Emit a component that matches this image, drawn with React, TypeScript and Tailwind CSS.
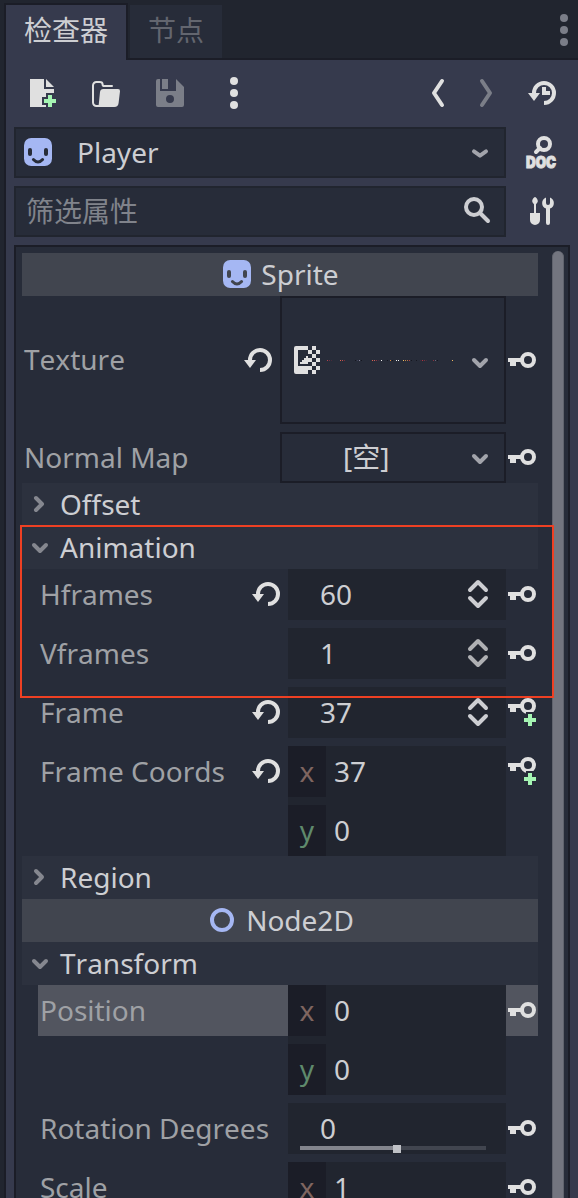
import React from "react";

type IconProps = { className?: string };

function Svg({ className = "", children }: IconProps & { children: React.ReactNode }) {
  return (
    <svg viewBox="0 0 16 16" width="32" height="32" className={`block shrink-0 overflow-visible ${className}`} fill="none">
      {children}
    </svg>
  );
}

const LIGHT = "#e0e0e0";
const DIM = "#7b7e88";
const GREEN = "#a5f5b3";

const Dots = ({ color }: { color: string }) => (
  <Svg>
    <circle cx="8" cy="2" r="2" fill={color} />
    <circle cx="8" cy="8" r="2" fill={color} />
    <circle cx="8" cy="14" r="2" fill={color} />
  </Svg>
);

const Face = ({ hole }: { hole: string }) => (
  <Svg>
    <rect x="1" y="1" width="14" height="14" rx="3.6" fill="#a5b7f3" />
    <rect x="3" y="6" width="2" height="4" rx="1" fill={hole} />
    <rect x="11" y="6" width="2" height="4" rx="1" fill={hole} />
    <path d="M5.7 11.8Q8 14.3 10.3 11.8" stroke={hole} strokeWidth="1.5" strokeLinecap="round" />
  </Svg>
);

const Revert = ({ clock = false }: { clock?: boolean }) => (
  <Svg>
    <path d="M4 8.3V8a5 5 0 1 1 5 5" stroke={LIGHT} strokeWidth="2" />
    <path d="M1 8h6l-3 4z" fill={LIGHT} />
    {clock && <path d="M8 5h2v2h2v2H8z" fill={LIGHT} />}
  </Svg>
);

const Key = () => (
  <Svg>
    <circle cx="11" cy="8" r="3" stroke={LIGHT} strokeWidth="2" />
    <path d="M1 7h7v2H5v2H2V9H1z" fill={LIGHT} />
  </Svg>
);

const KeyAdd = () => (
  <Svg>
    <clipPath id="key-cut">
      <path d="M0 0h16v8h-6v1H0z" />
    </clipPath>
    <circle cx="11" cy="5" r="3" stroke={LIGHT} strokeWidth="2" clipPath="url(#key-cut)" />
    <path d="M1 4h7v2H5v2H2V6H1z" fill={LIGHT} />
    <path d="M11 9h2v2h2v2h-2v2h-2v-2H9v-2h2z" fill={GREEN} />
  </Svg>
);

const ChevronDown = ({ color = "#a2a4ab" }: { color?: string }) => (
  <Svg>
    <path d="M5 7l3 3 3-3" stroke={color} strokeWidth="2" strokeLinecap="round" strokeLinejoin="round" />
  </Svg>
);

const ChevronRight = () => (
  <Svg>
    <path d="M6 5l3 3-3 3" stroke="#85878f" strokeWidth="2" strokeLinecap="round" strokeLinejoin="round" />
  </Svg>
);

const Spinner = ({ color }: { color: string }) => (
  <Svg>
    <path
      d="M4 6l4-4 4 4M4 10l4 4 4-4"
      stroke={color}
      strokeWidth="2"
      strokeLinecap="round"
      strokeLinejoin="round"
    />
  </Svg>
);

const TextureIcon = () => (
  <Svg>
    <path
      fill={LIGHT}
      d="M2 1h6v2H3v8h5v4H2a1 1 0 0 1-1-1V2a1 1 0 0 1 1-1zM4 10V9h1V8h1V7h1V6h1v4z"
    />
    <path
      fill={LIGHT}
      shapeRendering="crispEdges"
      d="M10 1h2v2h-2zM8 3h2v2H8zM12 3h2v2h-2zM10 5h2v2h-2zM8 7h2v2H8zM12 7h2v2h-2zM10 9h2v2h-2zM8 11h2v2H8zM12 11h2v2h-2zM10 13h2v2h-2z"
    />
  </Svg>
);

const SPECKS: [number, string][] = [
  [0, "#b0424c"], [2, "#6f2f44"], [4, "#4a2a3a"],
  [13, "#d9604c"], [15, "#c0504c"], [17, "#7b2c38"],
  [28, "#15161f"], [30, "#3d4058"], [32, "#8a869c"], [34, "#15161f"],
  [45, "#e0604c"], [47, "#c8605a"], [49, "#8a3340"], [51, "#4a2a3a"], [54, "#f0f0f0"],
  [60, "#15161f"], [63, "#d98a3a"], [65, "#15161f"], [69, "#f0f0f0"], [71, "#f0f0f0"],
  [76, "#f0c060"], [78, "#c98a4a"], [80, "#b0724c"], [82, "#b04340"], [84, "#15161f"],
  [89, "#15161f"], [93, "#4a2a3a"], [95, "#b0323c"], [97, "#7a2f3c"], [99, "#4a2a3a"],
  [106, "#8a3340"], [108, "#6a6678"], [110, "#15161f"], [125, "#f0b860"],
];

function TexturePreview() {
  return (
    <svg width="130" height="1" viewBox="0 0 130 1" className="block" shapeRendering="crispEdges">
      {SPECKS.map(([x, fill]) => (
        <rect key={x} x={x} y="0" width="1" height="1" fill={fill} />
      ))}
    </svg>
  );
}

function Label({ text, revert = false, className = "" }: { text: string; revert?: boolean; className?: string }) {
  return (
    <div className={`flex shrink-0 items-center justify-between pr-1.5 pb-px pl-0.5 text-[#9fa1a5] ${className}`}>
      <span>{text}</span>
      {revert && <Revert />}
    </div>
  );
}

function Section({ title, open = false }: { title: string; open?: boolean }) {
  return (
    <div className="flex h-[43px] items-center bg-[#2c313e] pb-px pl-0.5 text-[#cdced2]">
      {open ? <ChevronDown color="#85878f" /> : <ChevronRight />}
      <span className="pl-1">{title}</span>
    </div>
  );
}

function ClassHeader({ title, icon }: { title: string; icon: React.ReactNode }) {
  return (
    <div className="flex h-[43px] items-center justify-center bg-[#41454f] pb-px text-[#cdced2]">
      {icon}
      <span className="pl-2">{title}</span>
    </div>
  );
}

function NumberRow({
  label,
  value,
  revert,
  keyAdd,
  spinner,
}: {
  label: string;
  value: string;
  revert?: boolean;
  keyAdd?: boolean;
  spinner: string;
}) {
  return (
    <div className="flex h-[51px] pl-4">
      <Label text={label} revert={revert} className="w-[250px]" />
      <div className="flex w-[218px] items-center justify-between bg-[#21252f] pr-3 pb-px pl-8 text-[#cdced2]">
        <span>{value}</span>
        <Spinner color={spinner} />
      </div>
      <div className="flex w-8 items-center pb-px">{keyAdd ? <KeyAdd /> : <Key />}</div>
    </div>
  );
}

function Axis({ axis, value }: { axis: "x" | "y"; value: string }) {
  return (
    <div className="flex h-[51px] items-stretch">
      <span
        className={`flex w-[38px] items-center justify-center bg-[#1b1d27] pb-px ${
          axis === "x" ? "text-[#7f6560]" : "text-[#5f8a6c]"
        }`}
      >
        {axis}
      </span>
      <span className="flex items-center pb-px pl-2 text-[#cdced2]">{value}</span>
    </div>
  );
}

function VectorRow({
  label,
  x,
  y,
  revert,
  keyAdd,
  active,
}: {
  label: string;
  x: string;
  y?: string;
  revert?: boolean;
  keyAdd?: boolean;
  active?: boolean;
}) {
  const tint = active ? "bg-[#52555f]" : "";
  return (
    <div className="flex items-start pl-4">
      <Label text={label} revert={revert} className={`h-[51px] w-[250px] ${tint}`} />
      <div className="flex w-[218px] flex-col gap-2 bg-[#21252f]">
        <Axis axis="x" value={x} />
        {y !== undefined && <Axis axis="y" value={y} />}
      </div>
      <div className={`flex h-[51px] w-8 items-center pb-px ${tint}`}>{keyAdd ? <KeyAdd /> : <Key />}</div>
    </div>
  );
}

function Toolbar() {
  return (
    <div className="flex h-[67px] items-center pb-px pl-5">
      <Svg>
        <path d="M2 1v14h8v-1H8v-4h2V8h4V6H9V1zm8 0v4h4z" fill={LIGHT} />
        <path d="M11 9h2v2h2v2h-2v2h-2v-2H9v-2h2z" fill={GREEN} />
      </Svg>
      <Svg className="ml-8">
        <path
          d="M4.3 14.5H3.2a1.7 1.7 0 0 1-1.7-1.7V4.2a1.7 1.7 0 0 1 1.7-1.7h1.6c1 0 1.5.5 1.5 1.2 0 .6.4.8 1 .8H11"
          stroke={LIGHT}
          strokeWidth="1"
          strokeLinecap="round"
        />
        <path d="M6.6 6H14a1 1 0 0 1 1 1.1l-.7 5.900a2.200 2.200 0 0 1-2.200 2H3.600c.5-.3.7-.9.8-1.500L5 7.500C5.100 6.500 5.700 6 6.600 6z" fill={LIGHT} />
      </Svg>
      <Svg className="ml-8">
        <path
          fillRule="evenodd"
          fill={DIM}
          d="M3 1v6h8V1l4 4v9a1 1 0 0 1-1 1H2a1 1 0 0 1-1-1V2a1 1 0 0 1 1-1zM4 1h3v5H4zM8 9a2 2 0 1 0 0 4 2 2 0 0 0 0-4z"
        />
      </Svg>
      <div className="ml-8">
        <Dots color={LIGHT} />
      </div>
      <Svg className="ml-[172px]">
        <path d="M10 2L6 8l4 6" stroke={LIGHT} strokeWidth="2" strokeLinecap="round" strokeLinejoin="round" />
      </Svg>
      <Svg className="ml-4">
        <path d="M6 2l4 6-4 6" stroke={DIM} strokeWidth="2" strokeLinecap="round" strokeLinejoin="round" />
      </Svg>
      <div className="ml-6">
        <Revert clock />
      </div>
    </div>
  );
}

export default function App() {
  return (
    <div className="relative flex h-[1198px] w-[578px] overflow-hidden bg-[#21252f] pl-1 font-['Noto_Sans','Noto_Sans_CJK_SC',sans-serif] text-[28px] leading-none whitespace-nowrap [font-kerning:none]">
      <div className="flex w-[574px] flex-col">
        <div className="flex h-[60px] shrink-0 items-end pt-[3px]">
          <div className="flex h-[57px] w-[124px] items-start border-x-2 border-t-2 border-[#1b1d27] bg-[#363a4d] pt-[11px] pl-[18px] text-[#cdced2]">
            检查器
          </div>
          <div className="flex h-full flex-1 items-stretch justify-between border-b-2 border-[#1b1d27] pl-0.5">
            <div className="mt-0.5 w-[92px] bg-[#272c39] pt-[11px] pl-[18px] text-[#63666f]">节点</div>
            <div className="-mr-0.5 flex items-center pb-px">
              <Dots color={DIM} />
            </div>
          </div>
        </div>

        <div className="flex flex-1 flex-col border-l-2 border-[#1b1d27] bg-[#363a4d]">
          <Toolbar />

          <div className="flex h-[51px] shrink-0 items-stretch pl-2">
            <div className="flex w-[492px] items-center border-2 border-[#21252f] bg-[#272c39] pr-2 pb-px pl-1.5 text-[#cdced2]">
              <Face hole="#272c39" />
              <span className="flex-1 pl-[23px]">Player</span>
              <div className="pt-1">
                <svg viewBox="0 0 16 16" width="32" height="32" className="block" fill="none">
                  <path d="M5 6.700l3 2.100 3-2.100" stroke="#a2a4ab" strokeWidth="2" strokeLinecap="round" strokeLinejoin="round" />
                </svg>
              </div>
            </div>
            <div className="ml-[18px] flex items-center pb-px">
              <Svg>
                <circle cx="10" cy="4" r="3" stroke={LIGHT} strokeWidth="2" />
                <path d="M8 6L6 8" stroke={LIGHT} strokeWidth="2" strokeLinecap="round" />
                <text
                  x="1"
                  y="16"
                  fontFamily="Inter, sans-serif"
                  fontWeight="900"
                  fontSize="8.200"
                  textLength="15"
                  lengthAdjust="spacingAndGlyphs"
                  fill={LIGHT}
                  stroke={LIGHT}
                  strokeWidth=".5"
                >
                  DOC
                </text>
              </Svg>
            </div>
          </div>

          <div className="mt-2 flex h-[51px] shrink-0 items-stretch pl-2">
            <div className="flex w-[492px] items-center justify-between border-2 border-[#21252f] bg-[#272c39] pr-[11px] pb-px pl-2.5 text-[#80838b]">
              <span>筛选属性</span>
              <Svg>
                <circle cx="6.500" cy="6" r="4" stroke="#cdced2" strokeWidth="2" />
                <path d="M9.500 9l4 4" stroke="#cdced2" strokeWidth="2" strokeLinecap="round" />
              </Svg>
            </div>
            <div className="ml-5 flex items-center pb-px">
              <Svg>
                <path
                  d="M4.500 1c.6 0 1.400 1.200 1.400 2 0 .7-.5 1.200-.9 1.600V9h2v3.500a2.500 2.500 0 0 1-5 0V9h2V4.600C3.600 4.200 3.100 3.700 3.100 3c0-.8.8-2 1.400-2z"
                  fill={LIGHT}
                />
                <path
                  d="M10 1.200a3 3 0 0 0 0 5.600V14a1 1 0 0 0 2 0V6.800a3 3 0 0 0 0-5.600V4a1 1 0 0 1-2 0z"
                  fill={LIGHT}
                />
              </Svg>
            </div>
          </div>

          <div className="mt-2 ml-2 flex h-[953px] w-[556px] shrink-0 overflow-hidden border-x-2 border-t-2 border-[#1b1d27] bg-[#272c39] pl-1.5">
            <div className="w-[516px] shrink-0 pt-1.5">
              <ClassHeader title="Sprite" icon={<Face hole="#41454f" />} />
              <div className="flex h-32">
                <div className="flex w-[258px] items-center justify-between pr-1.5 pl-0.5 text-[#9fa1a5]">
                  <span className="pb-0.5">Texture</span>
                  <Revert />
                </div>
                <div className="flex w-[226px] items-center border-2 border-[#1b1d27] pr-2 pl-2.5">
                  <TextureIcon />
                  <div className="pl-[3px]">
                    <TexturePreview />
                  </div>
                  <div className="ml-auto pt-1">
                    <ChevronDown />
                  </div>
                </div>
                <div className="flex w-8 items-center">
                  <Key />
                </div>
              </div>
              <div className="mt-2 flex h-[51px]">
                <Label text="Normal Map" className="w-[258px]" />
                <div className="flex w-[226px] items-center justify-between border-2 border-[#1b1d27] pr-2 pb-px pl-[61px] text-[#cdced2]">
                  <span>[空]</span>
                  <div className="pt-0.5">
                    <ChevronDown />
                  </div>
                </div>
                <div className="flex w-8 items-center pb-px">
                  <Key />
                </div>
              </div>
              <Section title="Offset" />
              <Section title="Animation" open />
              <div className="flex flex-col gap-2">
                <NumberRow label="Hframes" value="60" revert spinner="#cdced2" />
                <NumberRow label="Vframes" value="1" spinner="#afb0b3" />
                <NumberRow label="Frame" value="37" revert keyAdd spinner="#cdced2" />
                <VectorRow label="Frame Coords" x="37" y="0" revert keyAdd />
              </div>
              <Section title="Region" />
              <ClassHeader
                title="Node2D"
                icon={
                  <Svg>
                    <circle cx="8" cy="8" r="5" stroke="#a5b7f3" strokeWidth="2" />
                  </Svg>
                }
              />
              <Section title="Transform" open />
              <div className="flex flex-col gap-2">
                <VectorRow label="Position" x="0" y="0" active />
                <div className="flex h-[51px] pl-4">
                  <Label text="Rotation Degrees" className="w-[250px]" />
                  <div className="flex w-[218px] flex-col bg-[#21252f] pr-5 pl-3 text-[#cdced2]">
                    <div className="flex h-[42px] items-end pb-[3px] pl-5">0</div>
                    <div className="flex h-2 items-start">
                      <div className="mt-px h-1 w-[93px] bg-[#83858d]" />
                      <div className="size-2 bg-[#bfc1c6]" />
                      <div className="mt-px h-1 flex-1 bg-[#41454f]" />
                    </div>
                  </div>
                  <div className="flex w-8 items-center pb-px">
                    <Key />
                  </div>
                </div>
                <VectorRow label="Scale" x="1" />
              </div>
            </div>
            <div className="mt-1 ml-3.5 h-[1000px] w-3 shrink-0 rounded-t-full border-x border-[#60636d] bg-[#73757f]" />
          </div>
        </div>
      </div>

      <div className="absolute top-[525px] left-5 h-[173px] w-[534px] border-2 border-[#ee4023]" />
    </div>
  );
}
